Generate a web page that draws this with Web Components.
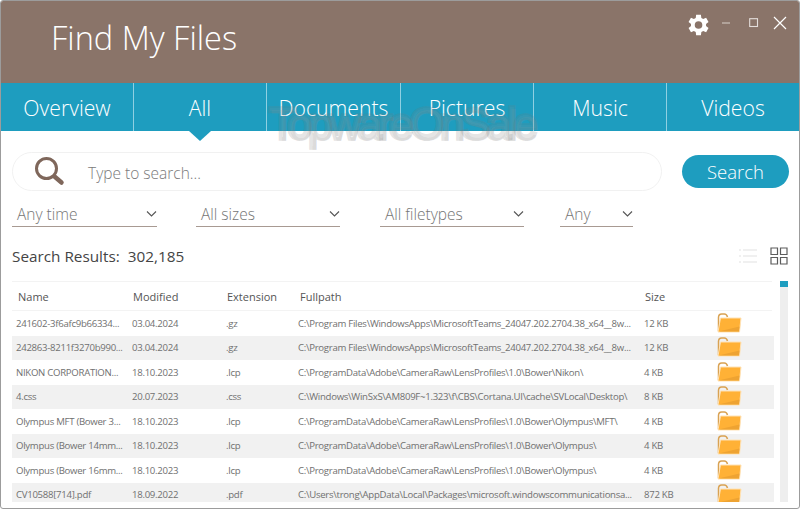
<!DOCTYPE html>
<html>
<head>
<meta charset="utf-8">
<title>Find My Files</title>
<style>
  html, body { margin: 0; padding: 0; background: #fff; }
  body { font-family: "Open Sans", "Liberation Sans", sans-serif; }
</style>
</head>
<body>
<app-window>
  <title-bar heading="Find My Files"></title-bar>
  <tab-bar active="All">
    <tab-item>Overview</tab-item>
    <tab-item selected>All</tab-item>
    <tab-item>Documents</tab-item>
    <tab-item>Pictures</tab-item>
    <tab-item>Music</tab-item>
    <tab-item>Videos</tab-item>
  </tab-bar>
  <search-row></search-row>
  <filter-row>
    <filter-select style="width:145px">Any time</filter-select>
    <filter-select style="width:144px;margin-left:39px">All sizes</filter-select>
    <filter-select style="width:144px;margin-left:40px">All filetypes</filter-select>
    <filter-select style="width:73px;margin-left:36px">Any</filter-select>
  </filter-row>
  <results-head count="302,185"></results-head>
  <results-table></results-table>
  <water-mark>TopwareOnSale</water-mark>
</app-window>

<script>
const FILES = [
  ['241602-3f6afc9b66334...', '03.04.2024', '.gz', 'C:\\Program Files\\WindowsApps\\MicrosoftTeams_24047.202.2704.38_x64__8w...', '12 KB'],
  ['242863-8211f3270b990...', '03.04.2024', '.gz', 'C:\\Program Files\\WindowsApps\\MicrosoftTeams_24047.202.2704.38_x64__8w...', '12 KB'],
  ['NIKON CORPORATION...', '18.10.2023', '.lcp', 'C:\\ProgramData\\Adobe\\CameraRaw\\LensProfiles\\1.0\\Bower\\Nikon\\', '4 KB'],
  ['4.css', '20.07.2023', '.css', 'C:\\Windows\\WinSxS\\AM809F~1.323\\f\\CBS\\Cortana.UI\\cache\\SVLocal\\Desktop\\', '8 KB'],
  ['Olympus MFT (Bower 3...', '18.10.2023', '.lcp', 'C:\\ProgramData\\Adobe\\CameraRaw\\LensProfiles\\1.0\\Bower\\Olympus\\MFT\\', '4 KB'],
  ['Olympus (Bower 14mm...', '18.10.2023', '.lcp', 'C:\\ProgramData\\Adobe\\CameraRaw\\LensProfiles\\1.0\\Bower\\Olympus\\', '4 KB'],
  ['Olympus (Bower 16mm...', '18.10.2023', '.lcp', 'C:\\ProgramData\\Adobe\\CameraRaw\\LensProfiles\\1.0\\Bower\\Olympus\\', '4 KB'],
  ['CV10588[714].pdf', '18.09.2022', '.pdf', 'C:\\Users\\trong\\AppData\\Local\\Packages\\microsoft.windowscommunicationsa...', '872 KB']
];

class AppWindow extends HTMLElement {
  connectedCallback() {
    this.attachShadow({ mode: 'open' });
    this.shadowRoot.innerHTML = `
      <style>
        :host {
          display: flex;
          flex-direction: column;
          position: relative;
          box-sizing: border-box;
          width: 800px;
          height: 509px;
          overflow: hidden;
          background: #fff;
          border: 1px solid #9c9c9c;
          border-radius: 3px;
          font-family: "Open Sans", "Liberation Sans", sans-serif;
        }
      </style>
      <slot></slot>
    `;
  }
}

class TitleBar extends HTMLElement {
  connectedCallback() {
    this.attachShadow({ mode: 'open' });
    this.shadowRoot.innerHTML = `
      <style>
        :host {
          display: flex;
          align-items: flex-start;
          justify-content: space-between;
          height: 82px;
          background: #8a7469;
          color: #fff;
        }
        h1 {
          margin: 15px 0 0 50px;
          font-size: 32.500px;
          line-height: 44px;
          font-weight: 300;
        }
        .controls { display: flex; align-items: center; margin: 11px 12px 0 0; }
        svg { display: block; }
        .small { margin-bottom: 4px; }
      </style>
      <h1>${this.getAttribute('heading')}</h1>
      <div class="controls">
        <svg width="26" height="26" viewBox="0 0 24 24" style="margin-right:10px">
          <path fill="#fff" fill-rule="evenodd" d="M19.400 13a7.600 7.600 0 0 0 0-2l2.300-1.800-2.200-3.800-2.700 1.100a7.500 7.500 0 0 0-1.700-1L14.700 2.600h-4.400l-.4 2.900a7.500 7.500 0 0 0-1.700 1L5.500 5.400 3.300 9.200 5.600 11a7.600 7.600 0 0 0 0 2l-2.300 1.800 2.200 3.800 2.700-1.100a7.500 7.500 0 0 0 1.700 1l.4 2.900h4.400l.4-2.900a7.500 7.500 0 0 0 1.700-1l2.700 1.100 2.200-3.800zM12.500 15.500a3.500 3.500 0 1 1 0-7 3.500 3.500 0 0 1 0 7z"/>
        </svg>
        <svg class="small" width="10" height="10" viewBox="0 0 10 10" style="margin-right:18px">
          <path d="M1 5h8" stroke="#d8cfca" stroke-width="1.200"/>
        </svg>
        <svg class="small" width="10" height="10" viewBox="0 0 10 10" style="margin-right:14px">
          <rect x=".7" y=".7" width="7.800" height="7.800" fill="none" stroke="#e4dedb" stroke-width="1.100"/>
        </svg>
        <svg class="small" width="14" height="14" viewBox="0 0 14 14">
          <path d="M1 1l12 12M13 1L1 13" stroke="#fff" stroke-width="1.200"/>
        </svg>
      </div>
    `;
  }
}

class TabBar extends HTMLElement {
  connectedCallback() {
    this.attachShadow({ mode: 'open' });
    this.shadowRoot.innerHTML = `
      <style>
        :host {
          display: grid;
          grid-template-columns: 133px 133px 134px 133px 133px 1fr;
          height: 48px;
          background: #1e9dbf;
        }
      </style>
      <slot></slot>
    `;
  }
}

class TabItem extends HTMLElement {
  connectedCallback() {
    this.attachShadow({ mode: 'open' });
    this.shadowRoot.innerHTML = `
      <style>
        :host {
          display: flex;
          position: relative;
          align-items: center;
          justify-content: center;
          box-sizing: border-box;
          height: 48px;
          padding-top: 1px;
          color: #fff;
          font-size: 21.200px;
          font-weight: 300;
          border-right: 1px solid #8fd0e2;
        }
        :host(:last-child) { border-right: 0; }
        :host([selected])::after {
          content: "";
          position: absolute;
          left: 50%;
          bottom: -10px;
          margin-left: -11px;
          border-left: 11px solid transparent;
          border-right: 11px solid transparent;
          border-top: 10px solid #1e9dbf;
        }
      </style>
      <slot></slot>
    `;
  }
}

class SearchRow extends HTMLElement {
  connectedCallback() {
    this.attachShadow({ mode: 'open' });
    this.shadowRoot.innerHTML = `
      <style>
        :host {
          display: flex;
          align-items: center;
          justify-content: space-between;
          height: 40px;
          margin-top: 20px;
          padding: 0 10px 0 11px;
        }
        .box {
          display: flex;
          align-items: center;
          box-sizing: border-box;
          width: 650px;
          height: 39px;
          padding-left: 21px;
          border: 1px solid #f1f1f1;
          border-radius: 20px;
          color: #7a7a7a;
          font-size: 15.500px;
          font-weight: 300;
        }
        .box span { padding-top: 3px; }
        svg { display: block; margin-right: 23px; }
        .btn {
          display: flex;
          align-items: center;
          justify-content: center;
          width: 107px;
          height: 33px;
          padding-top: 1px;
          box-sizing: border-box;
          border-radius: 17px;
          background: #1e9dbf;
          color: #fff;
          font-size: 18.500px;
          font-weight: 300;
        }
      </style>
      <div class="box">
        <svg width="31" height="31" viewBox="0 0 31 31">
          <circle cx="12.500" cy="12.500" r="10" fill="none" stroke="#7f675b" stroke-width="3"/>
          <path d="M20.500 20.500l7 6" stroke="#7f675b" stroke-width="4.500" stroke-linecap="round"/>
        </svg>
        <span>Type to search...</span>
      </div>
      <div class="btn">Search</div>
    `;
  }
}

class FilterRow extends HTMLElement {
  connectedCallback() {
    this.attachShadow({ mode: 'open' });
    this.shadowRoot.innerHTML = `
      <style>
        :host {
          display: flex;
          margin-top: 10px;
          padding-left: 11px;
        }
      </style>
      <slot></slot>
    `;
  }
}

class FilterSelect extends HTMLElement {
  connectedCallback() {
    this.attachShadow({ mode: 'open' });
    this.shadowRoot.innerHTML = `
      <style>
        :host {
          display: flex;
          align-items: center;
          justify-content: space-between;
          box-sizing: border-box;
          flex: none;
          height: 26px;
          padding: 0 0 0 5px;
          border-bottom: 1px solid #a89a92;
          color: #757575;
          font-size: 15.500px;
          font-weight: 300;
        }
        svg { display: block; }
      </style>
      <slot></slot>
      <svg width="11" height="8" viewBox="0 0 11 8">
        <path d="M1 1.500l4.500 4.500 4.500-4.500" fill="none" stroke="#555" stroke-width="1.100"/>
      </svg>
    `;
  }
}

class ResultsHead extends HTMLElement {
  connectedCallback() {
    this.attachShadow({ mode: 'open' });
    this.shadowRoot.innerHTML = `
      <style>
        :host {
          display: flex;
          align-items: center;
          justify-content: space-between;
          height: 24px;
          margin-top: 17px;
          padding: 0 11px;
          color: #444;
          font-size: 15.300px;
        }
        .icons { display: flex; gap: 13px; align-items: center; }
        b { font-weight: 400; margin-left: 4px; }
        svg { display: block; }
      </style>
      <div>Search Results: <b>${this.getAttribute('count')}</b></div>
      <div class="icons">
        <svg width="18" height="16" viewBox="0 0 18 16">
          <path d="M0 2h2M4 2h14M0 8h2M4 8h14M0 14h2M4 14h14" stroke="#ececec" stroke-width="1.300"/>
        </svg>
        <svg width="18" height="18" viewBox="0 0 18 18">
          <path d="M1 1h6.500v6.500H1zM10.500 1H17v6.500h-6.500zM1 10.500h6.500V17H1zM10.500 10.500H17V17h-6.500z" fill="none" stroke="#5c5c5c" stroke-width="1.200"/>
        </svg>
      </div>
    `;
  }
}

class FileRow extends HTMLElement {
  set data(cells) {
    this.attachShadow({ mode: 'open' });
    this.shadowRoot.innerHTML = `
      <style>
        :host {
          display: grid;
          grid-template-columns: 116px 94px 72px 346px 73px 1fr;
          align-items: center;
          height: 24.500px;
          padding-left: 4px;
          color: #707070;
          font-size: 9.600px;
          letter-spacing: -.28px;
          white-space: nowrap;
        }
        :host(:nth-child(even)) { background: #f1f1f1; }
        svg { display: block; margin-top: -1px; }
      </style>
      ${cells.map(c => `<span>${c}</span>`).join('')}
      <svg width="25" height="20" viewBox="0 0 25 20">
        <path d="M1.500 18V4.500c0-2.300 1.200-3.500 3.200-3.500h2.600c2 0 2.700 1.200 3.200 3" fill="none" stroke="#d9a253" stroke-width="1.500"/>
        <path d="M3.500 5H24l-1.500 14H1z" fill="#ffb136" stroke="#ffe2b5" stroke-width="1"/>
        <path d="M1.500 18.500l21-5-.5 5z" fill="#eea332"/>
      </svg>
    `;
  }
}

class ResultsTable extends HTMLElement {
  connectedCallback() {
    this.attachShadow({ mode: 'open' });
    this.shadowRoot.innerHTML = `
      <style>
        :host {
          display: flex;
          flex: 1;
          min-height: 0;
          margin-top: 13px;
          margin-bottom: 6px;
          padding: 0 11px;
        }
        .table { flex: none; width: 762px; overflow: hidden; }
        .head {
          display: grid;
          grid-template-columns: 115px 94px 73px 345px 1fr;
          align-items: center;
          box-sizing: border-box;
          width: 760px;
          height: 30px;
          padding-left: 6px;
          border-top: 1px solid #f3f3f3;
          border-bottom: 1px solid #f3f3f3;
          color: #555;
          font-size: 11px;
        }
        .track {
          flex: none;
          width: 8px;
          margin-left: 6px;
          background: #eeeeee;
        }
        .thumb { height: 6px; background: #1e9dbf; }
      </style>
      <div class="table">
        <div class="head">
          <span>Name</span><span>Modified</span><span>Extension</span><span>Fullpath</span><span>Size</span>
        </div>
        <div class="rows"></div>
      </div>
      <div class="track"><div class="thumb"></div></div>
    `;
    const rows = this.shadowRoot.querySelector('.rows');
    FILES.forEach(cells => {
      const row = document.createElement('file-row');
      row.data = cells;
      rows.appendChild(row);
    });
  }
}

class WaterMark extends HTMLElement {
  connectedCallback() {
    this.attachShadow({ mode: 'open' });
    this.shadowRoot.innerHTML = `
      <style>
        :host {
          position: absolute;
          left: 268px;
          top: 95px;
          color: rgba(255, 255, 255, .04);
          -webkit-text-stroke: 3.500px rgba(120, 120, 120, .2);
          text-shadow: 1.500px 1.500px 0 rgba(160, 160, 160, .14);
          font-family: "Liberation Sans", sans-serif;
          font-size: 44px;
          line-height: 56px;
          letter-spacing: -3.700px;
          white-space: nowrap;
          pointer-events: none;
        }
      </style>
      <slot></slot>
    `;
  }
}

customElements.define('app-window', AppWindow);
customElements.define('title-bar', TitleBar);
customElements.define('tab-bar', TabBar);
customElements.define('tab-item', TabItem);
customElements.define('search-row', SearchRow);
customElements.define('filter-row', FilterRow);
customElements.define('filter-select', FilterSelect);
customElements.define('results-head', ResultsHead);
customElements.define('file-row', FileRow);
customElements.define('results-table', ResultsTable);
customElements.define('water-mark', WaterMark);
</script>
</body>
</html>
